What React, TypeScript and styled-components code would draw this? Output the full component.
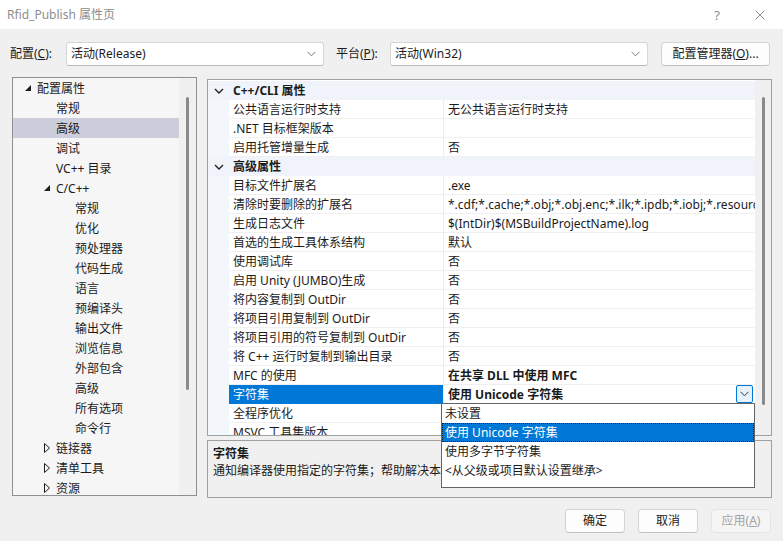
import React from "react";
import styled, { createGlobalStyle, css } from "styled-components";

const GlobalStyle = createGlobalStyle`
  html, body {
    margin: 0;
    padding: 0;
    background: #f0f0f0;
  }
  body {
    font-family: "Noto Sans", "Noto Sans CJK SC", sans-serif;
    font-size: 12px;
    color: #1b1b1b;
    overflow: hidden;
  }
`;

const Window = styled.div`
  width: 783px;
  height: 541px;
  display: flex;
  flex-direction: column;
  background: #f0f0f0;
  overflow: hidden;
`;

const TitleBar = styled.div`
  height: 29px;
  flex: none;
  display: flex;
  align-items: center;
  justify-content: space-between;
  background: #ffffff;
  padding-left: 7px;
`;

const Title = styled.span`
  color: #8d8d8d;
  font-size: 12px;
  line-height: 16px;
`;

const TitleButtons = styled.div`
  display: flex;
  height: 100%;
  padding-right: 0;
`;

const TitleBtn = styled.div`
  width: 46px;
  height: 100%;
  display: flex;
  align-items: center;
  justify-content: center;
  color: #8d8d8d;
  font-size: 13px;
  &:first-child {
    margin-right: 0;
    width: 40px;
  }
`;

const ConfigRow = styled.div`
  display: flex;
  align-items: center;
  height: 25px;
  margin-top: 12px;
  padding-left: 10px;
`;

const Label = styled.span<{ $w: number; $ml?: number }>`
  width: ${(p) => p.$w}px;
  margin-left: ${(p) => p.$ml ?? 0}px;
  flex: none;
  line-height: 16px;
`;

const Combo = styled.div`
  width: 258px;
  height: 24px;
  flex: none;
  box-sizing: border-box;
  border: 1px solid #d6d6d6;
  border-bottom-color: #b8b8b8;
  border-radius: 3px;
  background: #ffffff;
  display: flex;
  align-items: center;
  justify-content: space-between;
  padding: 0 7px 0 4px;
  line-height: 16px;
`;

const PushButton = styled.div<{ $disabled?: boolean; $w?: number }>`
  height: 24px;
  width: ${(p) => p.$w ?? 60}px;
  flex: none;
  box-sizing: border-box;
  border: 1px solid #d4d4d4;
  border-bottom-color: #c0c0c0;
  border-radius: 4px;
  background: #fdfdfd;
  display: flex;
  align-items: center;
  justify-content: center;
  line-height: 16px;
  ${(p) =>
    p.$disabled &&
    css`
      background: #f5f5f5;
      border-color: #e5e5e5;
      color: #a3a3a3;
    `}
`;

const Main = styled.div`
  display: flex;
  align-items: flex-start;
  gap: 10px;
  margin-top: 11px;
  padding-left: 12px;
`;

const TreePanel = styled.div`
  width: 185px;
  height: 419px;
  box-sizing: border-box;
  border: 1px solid #8e8f94;
  background: #f6f6f6;
  display: flex;
  overflow: hidden;
`;

const TreeList = styled.div`
  flex: 1;
`;

const ScrollTrack = styled.div<{ $w: number }>`
  width: ${(p) => p.$w}px;
  flex: none;
  background: #f0f0f0;
  display: flex;
  justify-content: center;
`;

const Thumb = styled.div<{ $top: number; $h: number }>`
  width: 3px;
  margin-top: ${(p) => p.$top}px;
  height: ${(p) => p.$h}px;
  border-radius: 2px;
  background: #8a8a8a;
`;

const TreeRow = styled.div<{ $level: number; $selected?: boolean }>`
  height: 20px;
  box-sizing: border-box;
  padding-top: 1px;
  display: flex;
  align-items: center;
  padding-left: ${(p) => 5 + 19 * (p.$level - 1)}px;
  background: ${(p) => (p.$selected ? "#cccedb" : "transparent")};
  white-space: nowrap;
  line-height: 16px;
`;

const Toggle = styled.span`
  width: 19px;
  flex: none;
  display: flex;
  align-items: center;
  justify-content: center;
  margin-top: -1px;
`;

const RightCol = styled.div`
  width: 565px;
  display: flex;
  flex-direction: column;
  gap: 4px;
  margin-top: 2px;
`;

const GridPanel = styled.div`
  position: relative;
  height: 357px;
  box-sizing: border-box;
  border: 1px solid #a0a0a0;
  display: flex;
  background: #ffffff;
`;

const GridBody = styled.div`
  flex: 1;
  overflow: hidden;
  padding-top: 1px;
`;

const CategoryRow = styled.div`
  height: 19px;
  display: flex;
  align-items: center;
  background: #f0f4fa;
  font-weight: bold;
  line-height: 16px;
`;

const CatText = styled.span`
  padding-left: 4px;
  padding-top: 1px;
`;

const PropRow = styled.div`
  height: 19px;
  display: flex;
`;

const Strip = styled.div`
  width: 21px;
  flex: none;
  height: 100%;
  background: #f3f6fb;
  display: flex;
  align-items: center;
  justify-content: center;
`;

const CatStrip = styled(Strip)`
  background: transparent;
`;

const NameCell = styled.div<{ $selected?: boolean }>`
  width: 214px;
  flex: none;
  box-sizing: border-box;
  padding: 1px 0 0 4px;
  display: flex;
  align-items: center;
  border-bottom: 1px solid #f0f0f0;
  white-space: nowrap;
  overflow: hidden;
  line-height: 16px;
  ${(p) =>
    p.$selected &&
    css`
      background: #0078d7;
      color: #ffffff;
      border-bottom-color: #0078d7;
    `}
`;

const ValueCell = styled.div<{ $bold?: boolean }>`
  flex: 1;
  min-width: 0;
  box-sizing: border-box;
  padding: 1px 0 0 4px;
  display: flex;
  align-items: center;
  justify-content: space-between;
  border-bottom: 1px solid #f0f0f0;
  border-left: 1px solid #ededed;
  white-space: nowrap;
  overflow: hidden;
  line-height: 16px;
  font-weight: ${(p) => (p.$bold ? "bold" : "normal")};
`;

const DropButton = styled.div`
  width: 15px;
  height: 16px;
  flex: none;
  margin: -1px 2px 0 0;
  border: 1px solid #0078d7;
  border-radius: 2px;
  background: #e5f1fb;
  display: flex;
  align-items: center;
  justify-content: center;
`;

const DropList = styled.div`
  position: absolute;
  left: 233px;
  top: 323px;
  width: 314px;
  height: 85px;
  box-sizing: border-box;
  border: 1px solid #646464;
  background: #ffffff;
  z-index: 10;
`;

const DropItem = styled.div<{ $selected?: boolean }>`
  height: 19px;
  box-sizing: border-box;
  padding: 1px 0 0 3px;
  display: flex;
  align-items: center;
  white-space: nowrap;
  line-height: 16px;
  ${(p) =>
    p.$selected &&
    css`
      background: #0078d7;
      color: #ffffff;
      outline: 1px dotted #2b1d00;
      outline-offset: -1px;
    `}
`;

const DescPanel = styled.div`
  height: 58px;
  box-sizing: border-box;
  border: 1px solid #a0a0a0;
  padding: 4px 5px;
  line-height: 17px;
`;

const DescTitle = styled.div`
  font-weight: bold;
`;

const Footer = styled.div`
  display: flex;
  justify-content: flex-end;
  gap: 13px;
  margin-top: 11px;
  padding-right: 12px;
`;

const Chevron = ({ color = "#555" }: { color?: string }) => (
  <svg width="9" height="6" viewBox="0 0 9 6">
    <polyline points="0.5,0.8 4.5,4.8 8.5,0.8" fill="none" stroke={color} strokeWidth="1" />
  </svg>
);

const CatChevron = () => (
  <svg width="10" height="6" viewBox="0 0 10 6">
    <polyline points="1,1 5,5 9,1" fill="none" stroke="#222" strokeWidth="1.4" />
  </svg>
);

const Expanded = () => (
  <svg width="6" height="6" viewBox="0 0 6 6">
    <polygon points="6,0 6,6 0,6" fill="#1e1e1e" />
  </svg>
);

const Collapsed = () => (
  <svg width="6" height="10" viewBox="0 0 6 10">
    <polygon points="0.5,0.5 5.5,5 0.5,9.5" fill="none" stroke="#1e1e1e" strokeWidth="1" />
  </svg>
);

type TreeItem = { text: string; level: number; toggle?: "open" | "closed"; selected?: boolean };

const treeItems: TreeItem[] = [
  { text: "配置属性", level: 1, toggle: "open" },
  { text: "常规", level: 2 },
  { text: "高级", level: 2, selected: true },
  { text: "调试", level: 2 },
  { text: "VC++ 目录", level: 2 },
  { text: "C/C++", level: 2, toggle: "open" },
  { text: "常规", level: 3 },
  { text: "优化", level: 3 },
  { text: "预处理器", level: 3 },
  { text: "代码生成", level: 3 },
  { text: "语言", level: 3 },
  { text: "预编译头", level: 3 },
  { text: "输出文件", level: 3 },
  { text: "浏览信息", level: 3 },
  { text: "外部包含", level: 3 },
  { text: "高级", level: 3 },
  { text: "所有选项", level: 3 },
  { text: "命令行", level: 3 },
  { text: "链接器", level: 2, toggle: "closed" },
  { text: "清单工具", level: 2, toggle: "closed" },
  { text: "资源", level: 2, toggle: "closed" },
];

type GridItem =
  | { kind: "cat"; name: string }
  | { kind: "prop"; name: string; value: string; bold?: boolean; selected?: boolean };

const gridItems: GridItem[] = [
  { kind: "cat", name: "C++/CLI 属性" },
  { kind: "prop", name: "公共语言运行时支持", value: "无公共语言运行时支持" },
  { kind: "prop", name: ".NET 目标框架版本", value: "" },
  { kind: "prop", name: "启用托管增量生成", value: "否" },
  { kind: "cat", name: "高级属性" },
  { kind: "prop", name: "目标文件扩展名", value: ".exe" },
  { kind: "prop", name: "清除时要删除的扩展名", value: "*.cdf;*.cache;*.obj;*.obj.enc;*.ilk;*.ipdb;*.iobj;*.resources;*.tlb" },
  { kind: "prop", name: "生成日志文件", value: "$(IntDir)$(MSBuildProjectName).log" },
  { kind: "prop", name: "首选的生成工具体系结构", value: "默认" },
  { kind: "prop", name: "使用调试库", value: "否" },
  { kind: "prop", name: "启用 Unity (JUMBO)生成", value: "否" },
  { kind: "prop", name: "将内容复制到 OutDir", value: "否" },
  { kind: "prop", name: "将项目引用复制到 OutDir", value: "否" },
  { kind: "prop", name: "将项目引用的符号复制到 OutDir", value: "否" },
  { kind: "prop", name: "将 C++ 运行时复制到输出目录", value: "否" },
  { kind: "prop", name: "MFC 的使用", value: "在共享 DLL 中使用 MFC", bold: true },
  { kind: "prop", name: "字符集", value: "使用 Unicode 字符集", bold: true, selected: true },
  { kind: "prop", name: "全程序优化", value: "" },
  { kind: "prop", name: "MSVC 工具集版本", value: "" },
];

const options = ["未设置", "使用 Unicode 字符集", "使用多字节字符集", "<从父级或项目默认设置继承>"];

export default function App() {
  return (
    <Window>
      <GlobalStyle />
      <TitleBar>
        <Title>Rfid_Publish 属性页</Title>
        <TitleButtons>
          <TitleBtn>?</TitleBtn>
          <TitleBtn>
            <svg width="10" height="10" viewBox="0 0 10 10">
              <path d="M0.5 0.5 L9.5 9.5 M9.5 0.5 L0.5 9.5" stroke="#8d8d8d" strokeWidth="1" />
            </svg>
          </TitleBtn>
        </TitleButtons>
      </TitleBar>

      <ConfigRow>
        <Label $w={56}>
          配置(<u>C</u>):
        </Label>
        <Combo>
          <span>活动(Release)</span>
          <Chevron color="#777" />
        </Combo>
        <Label $w={54} $ml={12}>
          平台(<u>P</u>):
        </Label>
        <Combo>
          <span>活动(Win32)</span>
          <Chevron color="#777" />
        </Combo>
        <PushButton $w={109} style={{ marginLeft: 13 }}>
          配置管理器(<u>O</u>)...
        </PushButton>
      </ConfigRow>

      <Main>
        <TreePanel>
          <TreeList>
            {treeItems.map((it, i) => (
              <TreeRow key={i} $level={it.level} $selected={it.selected}>
                <Toggle>
                  {it.toggle === "open" && <Expanded />}
                  {it.toggle === "closed" && <Collapsed />}
                </Toggle>
                {it.text}
              </TreeRow>
            ))}
          </TreeList>
          <ScrollTrack $w={17}>
            <Thumb $top={19} $h={293} />
          </ScrollTrack>
        </TreePanel>

        <RightCol>
          <GridPanel>
            <GridBody>
              {gridItems.map((it, i) =>
                it.kind === "cat" ? (
                  <CategoryRow key={i}>
                    <CatStrip>
                      <CatChevron />
                    </CatStrip>
                    <CatText>{it.name}</CatText>
                  </CategoryRow>
                ) : (
                  <PropRow key={i}>
                    <Strip />
                    <NameCell $selected={it.selected}>{it.name}</NameCell>
                    <ValueCell $bold={it.bold}>
                      <span>{it.value}</span>
                      {it.selected && (
                        <DropButton>
                          <Chevron color="#333" />
                        </DropButton>
                      )}
                    </ValueCell>
                  </PropRow>
                )
              )}
            </GridBody>
            <ScrollTrack $w={16}>
              <Thumb $top={17} $h={308} />
            </ScrollTrack>
            <DropList>
              {options.map((o, i) => (
                <DropItem key={i} $selected={i === 1}>
                  {o}
                </DropItem>
              ))}
            </DropList>
          </GridPanel>
          <DescPanel>
            <DescTitle>字符集</DescTitle>
            <div>通知编译器使用指定的字符集；帮助解决本地化问题。</div>
          </DescPanel>
        </RightCol>
      </Main>

      <Footer>
        <PushButton>确定</PushButton>
        <PushButton>取消</PushButton>
        <PushButton $disabled>
          应用(<u>A</u>)
        </PushButton>
      </Footer>
    </Window>
  );
}
